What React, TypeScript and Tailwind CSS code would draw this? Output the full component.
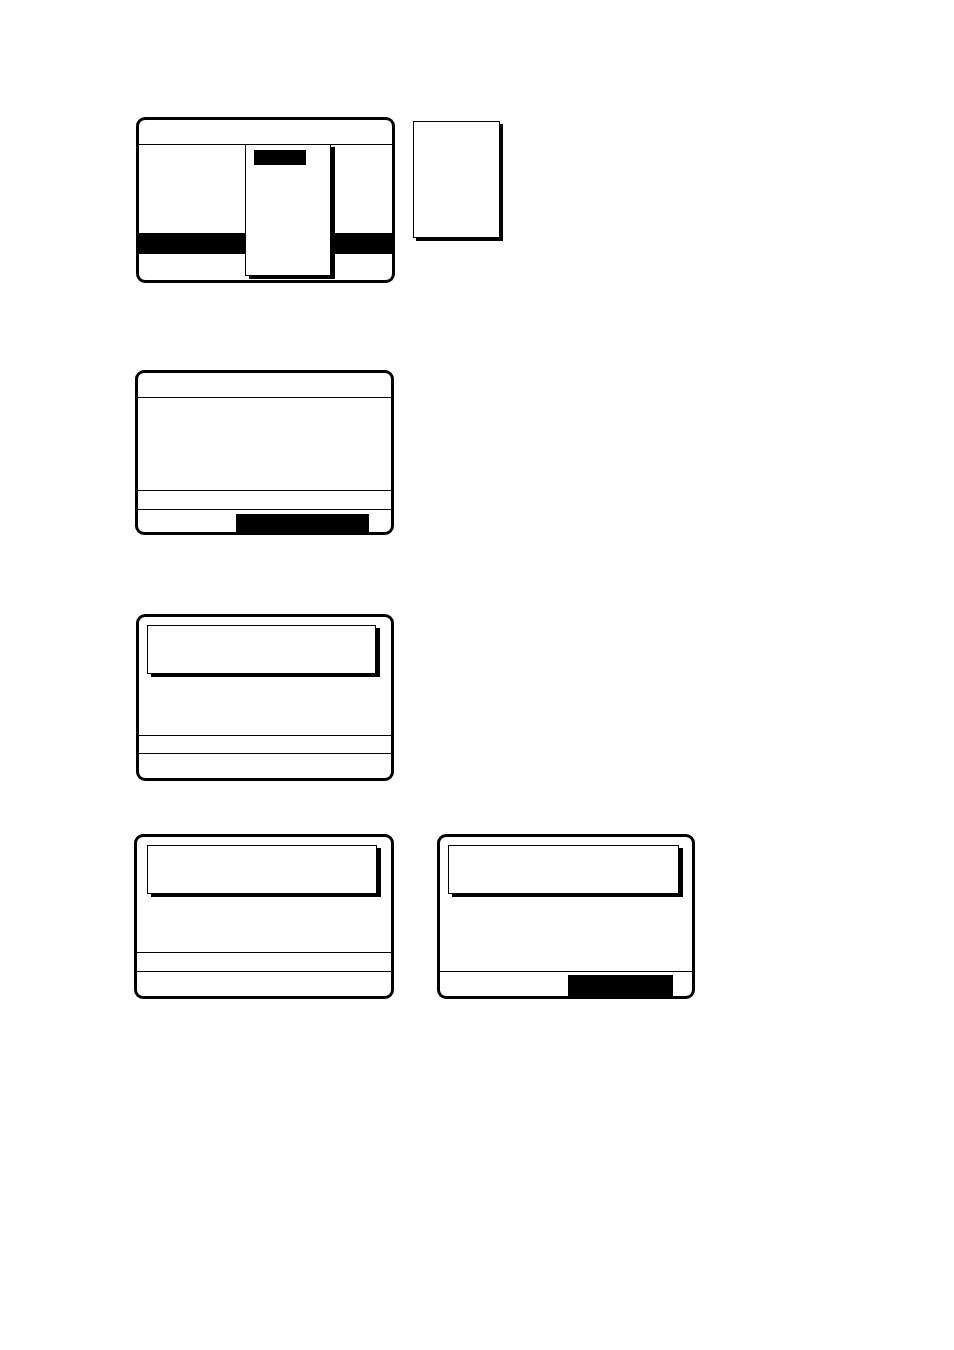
import React from "react";

function Panel({ className = "", children }: { className?: string; children?: React.ReactNode }) {
  return (
    <div className={`relative flex flex-col overflow-hidden rounded-[9px] border-[3px] border-black bg-white ${className}`}>
      {children}
    </div>
  );
}

function MsgBox({ className = "" }: { className?: string }) {
  return <div className={`h-[49px] border border-black bg-white shadow-[4px_3px_0_#000] ${className}`} />;
}

export default function App() {
  return (
    <div className="relative h-[1350px] w-[954px] bg-white pl-[134px] pt-[117px] font-['Liberation_Sans',sans-serif]">
      {/* Row 1 */}
      <div className="ml-[2px] flex items-start">
        <Panel className="h-[166px] w-[259px] overflow-visible">
          <div className="h-[25px] shrink-0 border-b border-black" />
          <div className="h-[88px] shrink-0" />
          <div className="h-[21px] shrink-0 bg-black" />
          <div className="flex-1" />
          <div className="absolute left-[106px] top-[24px] h-[132px] w-[86px] border border-black bg-white shadow-[4px_3px_0_#000]">
            <div className="ml-[8px] mt-[5px] h-[15px] w-[52px] bg-black" />
          </div>
        </Panel>
        <div className="ml-[18px] mt-[4px] h-[117px] w-[87px] border border-black bg-white shadow-[3px_3px_0_#000]" />
      </div>

      {/* Row 2 */}
      <div className="ml-[1px] mt-[87px] flex">
        <Panel className="h-[165px] w-[259px]">
          <div className="h-[25px] shrink-0 border-b border-black" />
          <div className="h-[93px] shrink-0 border-b border-black" />
          <div className="h-[19px] shrink-0 border-b border-black" />
          <div className="flex flex-1 items-end">
            <div className="ml-[98px] h-[18px] w-[133px] bg-black" />
          </div>
        </Panel>
      </div>

      {/* Row 3 */}
      <div className="ml-[2px] mt-[79px] flex">
        <Panel className="h-[167px] w-[258px]">
          <div className="h-[119px] shrink-0 border-b border-black pl-[8px] pt-[8px]">
            <MsgBox className="h-[49px] w-[229px]" />
          </div>
          <div className="h-[18px] shrink-0 border-b border-black" />
          <div className="flex-1" />
        </Panel>
      </div>

      {/* Row 4 */}
      <div className="mt-[53px] flex">
        <Panel className="h-[165px] w-[260px]">
          <div className="h-[116px] shrink-0 border-b border-black pl-[10px] pt-[8px]">
            <MsgBox className="w-[230px]" />
          </div>
          <div className="h-[19px] shrink-0 border-b border-black" />
          <div className="flex-1" />
        </Panel>
        <Panel className="ml-[43px] h-[165px] w-[258px]">
          <div className="h-[135px] shrink-0 border-b border-black pl-[8px] pt-[8px]">
            <MsgBox className="w-[231px]" />
          </div>
          <div className="flex flex-1 items-end">
            <div className="ml-[128px] h-[21px] w-[105px] bg-black" />
          </div>
        </Panel>
      </div>
    </div>
  );
}
